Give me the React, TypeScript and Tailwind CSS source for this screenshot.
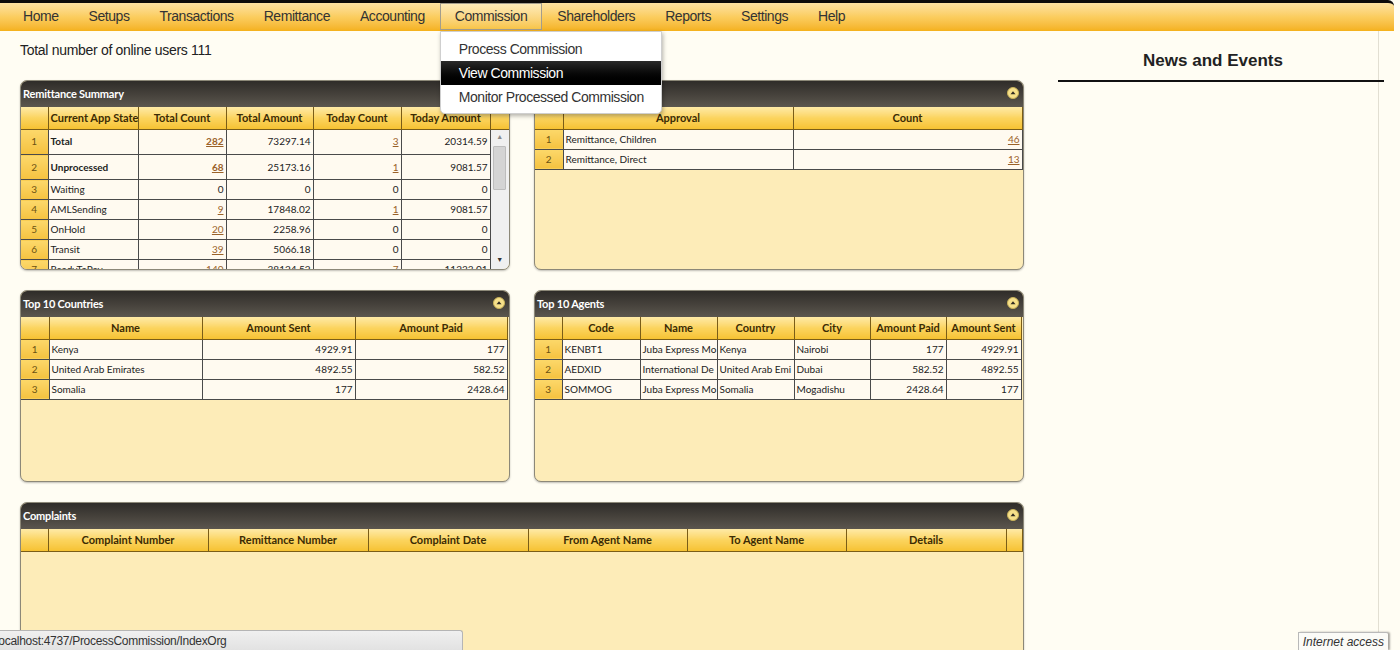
import React from "react";

type Col = { title: string; w: number };
type CellVal = string | { t: string; link?: boolean; bold?: boolean; right?: boolean };

const NAV = [
  "Home",
  "Setups",
  "Transactions",
  "Remittance",
  "Accounting",
  "Commission",
  "Shareholders",
  "Reports",
  "Settings",
  "Help",
];

const TH =
  "h-[22px] border-r border-b border-[#7a5d17] bg-gradient-to-b from-[#feeaa6] via-[#fbd45e] to-[#f6c231] px-[2px] text-center text-[11px] font-bold text-[#3b2b04] overflow-hidden whitespace-nowrap";
const NUM_TD =
  "border-r border-b border-[#4a4a4a] bg-gradient-to-b from-[#fcd86a] to-[#f5c23f] text-center text-[10px] text-[#6b5212]";
const DATA_TD =
  "border-r border-b border-[#4a4a4a] bg-[#fffaf0] px-[2px] text-[10px] text-[#222] overflow-hidden whitespace-nowrap";

const num = (t: string): CellVal => ({ t, right: true });
const link = (t: string, bold = false): CellVal => ({ t, link: true, bold, right: true });

const renderCell = (c: CellVal) => {
  if (typeof c === "string") return c;
  if (c.link)
    return (
      <a className={`underline text-[#9a6128] ${c.bold ? "font-bold" : ""}`}>{c.t}</a>
    );
  return <span className={c.bold ? "font-bold" : ""}>{c.t}</span>;
};

const Toggle = () => (
  <svg width="12" height="12" viewBox="0 0 12 12" className="absolute right-[4px] top-[6px]">
    <circle cx="6" cy="6" r="5.5" fill="#f6e08a" stroke="#c9b25a" strokeWidth="1" />
    <path d="M3.5 7.3 L6 4.3 L8.5 7.3 Z" fill="#2e2a22" />
  </svg>
);

const Panel = ({
  title,
  className = "",
  children,
}: {
  title: string;
  className?: string;
  children?: React.ReactNode;
}) => (
  <section
    className={`overflow-hidden rounded-[7px] border border-[#8c8878] bg-[#fdecb8] shadow-[0_1px_2px_rgba(0,0,0,0.25)] ${className}`}
  >
    <header className="relative flex h-[26px] items-center bg-gradient-to-b from-[#2f2c29] via-[#45413b] to-[#5b564e] px-[2px]">
      <h3 className="font-['Lato',sans-serif] text-[11px] font-bold tracking-[-0.2px] text-white">
        {title}
      </h3>
      <Toggle />
    </header>
    {children}
  </section>
);

const HeadRow = ({ cols, filler = 0 }: { cols: Col[]; filler?: number }) => (
  <tr>
    <th className={TH} style={{ width: 27 }} />
    {cols.map((c) => (
      <th key={c.title} className={TH}>
        {c.title}
      </th>
    ))}
    {filler > 0 && <th className={TH} />}
  </tr>
);

const GridTable = ({
  cols,
  rows,
  numW = 27,
  filler = 0,
  rowH = 20,
}: {
  cols: Col[];
  rows: CellVal[][];
  numW?: number;
  filler?: number;
  rowH?: number;
}) => {
  const total = numW + cols.reduce((s, c) => s + c.w, 0) + filler;
  return (
    <table
      className="table-fixed border-collapse font-['Lato',sans-serif]"
      style={{ width: total }}
    >
      <colgroup>
        <col style={{ width: numW }} />
        {cols.map((c) => (
          <col key={c.title} style={{ width: c.w }} />
        ))}
        {filler > 0 && <col style={{ width: filler }} />}
      </colgroup>
      <thead>
        <HeadRow cols={cols} filler={filler} />
      </thead>
      <tbody>
        {rows.map((r, i) => (
          <tr key={i} style={{ height: rowH }}>
            <td className={NUM_TD}>{i + 1}</td>
            {r.map((c, j) => (
              <td
                key={j}
                className={`${DATA_TD} ${typeof c !== "string" && c.right ? "text-right" : "text-left"}`}
              >
                {renderCell(c)}
              </td>
            ))}
          </tr>
        ))}
      </tbody>
    </table>
  );
};

const summaryCols: Col[] = [
  { title: "Current App State", w: 90 },
  { title: "Total Count", w: 88 },
  { title: "Total Amount", w: 87 },
  { title: "Today Count", w: 88 },
  { title: "Today Amount", w: 89 },
];

const summaryRows: { h: number; cells: CellVal[] }[] = [
  { h: 25, cells: [{ t: "Total", bold: true }, link("282", true), num("73297.14"), link("3"), num("20314.59")] },
  { h: 25, cells: [{ t: "Unprocessed", bold: true }, link("68", true), num("25173.16"), link("1"), num("9081.57")] },
  { h: 20, cells: ["Waiting", num("0"), num("0"), num("0"), num("0")] },
  { h: 20, cells: ["AMLSending", link("9"), num("17848.02"), link("1"), num("9081.57")] },
  { h: 20, cells: ["OnHold", link("20"), num("2258.96"), num("0"), num("0")] },
  { h: 20, cells: ["Transit", link("39"), num("5066.18"), num("0"), num("0")] },
  { h: 20, cells: ["ReadyToPay", link("140"), num("38124.52"), link("7"), num("11233.01")] },
];

const RemittanceSummary = () => (
  <Panel title="Remittance Summary" className="h-[190px]">
    <table className="table-fixed border-collapse font-['Lato',sans-serif]" style={{ width: 488 }}>
      <colgroup>
        <col style={{ width: 27 }} />
        {summaryCols.map((c) => (
          <col key={c.title} style={{ width: c.w }} />
        ))}
        <col style={{ width: 19 }} />
      </colgroup>
      <thead>
        <HeadRow cols={summaryCols} filler={19} />
      </thead>
    </table>
    <div className="flex h-[139px] overflow-hidden">
      <table className="table-fixed border-collapse self-start font-['Lato',sans-serif]" style={{ width: 469 }}>
        <colgroup>
          <col style={{ width: 27 }} />
          {summaryCols.map((c) => (
            <col key={c.title} style={{ width: c.w }} />
          ))}
        </colgroup>
        <tbody>
          {summaryRows.map((r, i) => (
            <tr key={i} style={{ height: r.h }}>
              <td className={NUM_TD}>{i + 1}</td>
              {r.cells.map((c, j) => (
                <td
                  key={j}
                  className={`${DATA_TD} ${typeof c !== "string" && c.right ? "text-right" : "text-left"}`}
                >
                  {renderCell(c)}
                </td>
              ))}
            </tr>
          ))}
        </tbody>
      </table>
      <div className="flex w-[19px] flex-col items-center bg-[#f0f0f0]">
        <span className="mt-[2px] text-[7px] leading-[10px] text-[#888]">▲</span>
        <div className="mt-[4px] h-[44px] w-[13px] rounded-[1px] border border-[#bdbdbd] bg-[#d4d4d4]" />
        <div className="flex-1" />
        <span className="mb-[4px] text-[7px] leading-[10px] text-[#333]">▼</span>
      </div>
    </div>
  </Panel>
);

export default function App() {
  return (
    <div className="relative h-[650px] w-[1400px] overflow-hidden bg-[#fffdf3] font-['Liberation_Sans',Arial,sans-serif]">
      <nav className="flex h-[31px] w-[1394px] rounded-tr-[6px] border-t-[3px] border-[#0d0b0a] bg-gradient-to-b from-[#fde2a0] via-[#fbcd5e] to-[#f4b11a] pl-[8px]">
        {NAV.map((n) => {
          const active = n === "Commission";
          return (
            <div
              key={n}
              className={`relative flex h-[27px] items-center border px-[14px] text-[14px] tracking-[-0.45px] text-[#333] ${
                active
                  ? "border-[#a39d8c] bg-gradient-to-b from-[#feebb8] to-[#f8c548]"
                  : "border-transparent"
              }`}
            >
              {n}
              {active && (
                <div className="absolute left-[-1px] top-[27px] z-10 w-[222px] rounded-b-[5px] border border-[#cfcfcf] bg-white pb-[4px] pt-[5px] shadow-[1px_2px_4px_rgba(0,0,0,0.3)]">
                  <div className="flex h-[24px] items-center pl-[18px] text-[#333]">Process Commission</div>
                  <div className="flex h-[24px] items-center bg-gradient-to-b from-[#2a2a2a] to-[#000] pl-[18px] text-white">
                    View Commission
                  </div>
                  <div className="flex h-[24px] items-center pl-[18px] text-[#333]">
                    Monitor Processed Commission
                  </div>
                </div>
              )}
            </div>
          );
        })}
      </nav>

      <div className="flex h-[619px] w-[1379px] border-r border-[#e2dfd2]">
        <main className="w-[1024px] shrink-0 pl-[20px] pt-[11px]">
          <p className="text-[14px] leading-[16px] tracking-[-0.3px] text-[#222]">
            Total number of online users 111
          </p>
          <div className="mt-[22px] grid grid-cols-[490px_490px] gap-x-[24px] gap-y-[20px]">
            <RemittanceSummary />
            <Panel title="" className="h-[190px]">
              <GridTable
                cols={[
                  { title: "Approval", w: 230 },
                  { title: "Count", w: 229 },
                ]}
                numW={28}
                rows={[
                  ["Remittance, Children", link("46")],
                  ["Remittance, Direct", link("13")],
                ]}
              />
            </Panel>
            <Panel title="Top 10 Countries" className="h-[192px]">
              <GridTable
                cols={[
                  { title: "Name", w: 153 },
                  { title: "Amount Sent", w: 153 },
                  { title: "Amount Paid", w: 152 },
                ]}
                numW={28}
                rows={[
                  ["Kenya", num("4929.91"), num("177")],
                  ["United Arab Emirates", num("4892.55"), num("582.52")],
                  ["Somalia", num("177"), num("2428.64")],
                ]}
              />
            </Panel>
            <Panel title="Top 10 Agents" className="h-[192px]">
              <GridTable
                cols={[
                  { title: "Code", w: 78 },
                  { title: "Name", w: 77 },
                  { title: "Country", w: 77 },
                  { title: "City", w: 76 },
                  { title: "Amount Paid", w: 76 },
                  { title: "Amount Sent", w: 75 },
                ]}
                rows={[
                  ["KENBT1", "Juba Express Mo", "Kenya", "Nairobi", num("177"), num("4929.91")],
                  ["AEDXID", "International De", "United Arab Emi", "Dubai", num("582.52"), num("4892.55")],
                  ["SOMMOG", "Juba Express Mo", "Somalia", "Mogadishu", num("2428.64"), num("177")],
                ]}
              />
            </Panel>
            <Panel title="Complaints" className="col-span-2 h-[200px]">
              <GridTable
                cols={[
                  { title: "Complaint Number", w: 160 },
                  { title: "Remittance Number", w: 160 },
                  { title: "Complaint Date", w: 160 },
                  { title: "From Agent Name", w: 159 },
                  { title: "To Agent Name", w: 159 },
                  { title: "Details", w: 160 },
                ]}
                filler={16}
                rows={[]}
              />
            </Panel>
          </div>
        </main>

        <aside className="ml-[34px] w-[310px] pt-[19px]">
          <h2 className="text-center text-[17px] font-bold leading-[22px] text-[#222]">News and Events</h2>
          <div className="mt-[8px] h-[2px] w-[326px] bg-[#111]" />
        </aside>
      </div>

      <div className="absolute bottom-0 left-0 flex h-[20px] w-[463px] items-center overflow-hidden rounded-tr-[3px] border-r border-t border-[#b5b5b5] bg-gradient-to-b from-[#f0f0f0] to-[#e2e2e2]">
        <span className="ml-[-4px] whitespace-nowrap text-[12px] tracking-[-0.3px] text-[#333]">
          localhost:4737/ProcessCommission/IndexOrg
        </span>
      </div>
      <div className="absolute bottom-0 right-[12px] flex h-[18px] items-center rounded-tr-[2px] border-l border-t border-[#b9b9b9] bg-[#fbfbf7] px-[4px] shadow-[2px_0_2px_rgba(0,0,0,0.35)]">
        <span className="text-[12px] italic text-[#333]">Internet access</span>
      </div>
    </div>
  );
}
